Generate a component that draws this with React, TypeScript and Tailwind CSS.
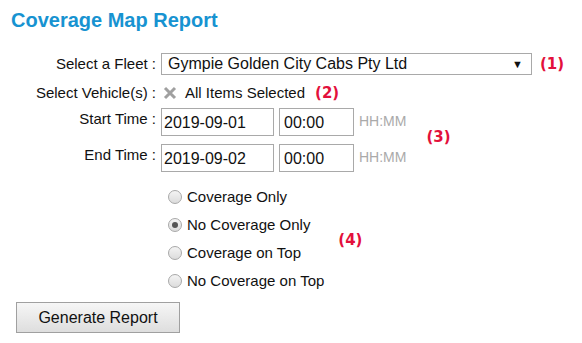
import React from "react";

function Radio({ checked }: { checked?: boolean }) {
  return (
    <span className="relative inline-block w-[14px] h-[14px] rounded-full border border-[#a8a8a8] bg-gradient-to-b from-[#f4f4f4] to-[#dcdcdc] shrink-0">
      {checked && (
        <span className="absolute left-[3px] top-[3px] w-[6px] h-[6px] rounded-full bg-[#555]" />
      )}
    </span>
  );
}

export default function App() {
  const font = { fontFamily: '"Liberation Sans", Arial, sans-serif' };
  const red = "text-[#e3103c] font-bold text-[15px] [font-family:'DejaVu_Sans',sans-serif]";
  return (
    <div className="w-[582px] h-[343px] bg-white text-[#111] overflow-hidden" style={font}>
      <div className="pl-[11px] pt-[8px] text-[20px] font-bold text-[#1793d1] leading-[24px]">
        Coverage Map Report
      </div>

      <div className="mt-[21px] flex items-center h-[22px]">
        <div className="w-[157px] text-right text-[15px] pr-[1px]">Select a Fleet :</div>
        <div className="ml-[4px] w-[371px] h-[22px] border border-[#a9a9a9] flex items-center justify-between pl-[6px] pr-[8px] text-[16px]">
          <span>Gympie Golden City Cabs Pty Ltd</span>
          <span className="text-[11px]">▼</span>
        </div>
        <span className={`ml-[8px] ${red}`}>(1)</span>
      </div>

      <div className="mt-[6px] flex items-center h-[24px]">
        <div className="w-[157px] text-right text-[15px] pr-[1px]">Select Vehicle(s) :</div>
        <svg className="ml-[6px]" width="14" height="14" viewBox="0 0 14 14">
          <path d="M2 2 L12 12 M12 2 L2 12" stroke="#a0a0a0" strokeWidth="3" />
        </svg>
        <span className="ml-[8px] text-[15px]">All Items Selected</span>
        <span className={`ml-[10px] ${red}`}>(2)</span>
      </div>

      <div className="flex items-center">
        <div className="flex flex-col gap-[8px] mt-[3px]">
          <div className="flex items-start h-[28px]">
            <div className="w-[157px] text-right text-[15px] pr-[1px] pt-[0px]">Start Time :</div>
            <div className="ml-[4px] w-[113px] h-[28px] border border-[#a9a9a9] flex items-center pl-[2px] text-[16px] pt-[2px]">2019-09-01</div>
            <div className="ml-[5px] w-[75px] h-[28px] border border-[#a9a9a9] flex items-center pl-[4px] text-[16px] pt-[2px]">00:00</div>
            <span className="ml-[5px] text-[14px] text-[#aaa] pt-[3px]">HH:MM</span>
          </div>
          <div className="flex items-start h-[28px]">
            <div className="w-[157px] text-right text-[15px] pr-[1px] pt-[0px]">End Time :</div>
            <div className="ml-[4px] w-[113px] h-[28px] border border-[#a9a9a9] flex items-center pl-[2px] text-[16px] pt-[2px]">2019-09-02</div>
            <div className="ml-[5px] w-[75px] h-[28px] border border-[#a9a9a9] flex items-center pl-[4px] text-[16px] pt-[2px]">00:00</div>
            <span className="ml-[5px] text-[14px] text-[#aaa] pt-[3px]">HH:MM</span>
          </div>
        </div>
        <span className={`ml-[20px] mt-[-2px] ${red}`}>(3)</span>
      </div>

      <div className="flex items-center mt-[16px]">
        <div className="flex flex-col pl-[168px] gap-[10px]">
          {[
            ["Coverage Only", false],
            ["No Coverage Only", true],
            ["Coverage on Top", false],
            ["No Coverage on Top", false],
          ].map(([label, c]) => (
            <div key={label as string} className="flex items-center h-[18px] gap-[5px] text-[15px]">
              <Radio checked={c as boolean} />
              <span>{label as string}</span>
            </div>
          ))}
        </div>
        <span className={`ml-[14px] mt-[2px] ${red}`}>(4)</span>
      </div>

      <div className="mt-[12px] pl-[16px]">
        <div className="w-[164px] h-[31px] border border-[#a0a0a0] bg-gradient-to-b from-[#f6f6f6] to-[#dedede] flex items-center justify-center text-[16px]">
          Generate Report
        </div>
      </div>
    </div>
  );
}
